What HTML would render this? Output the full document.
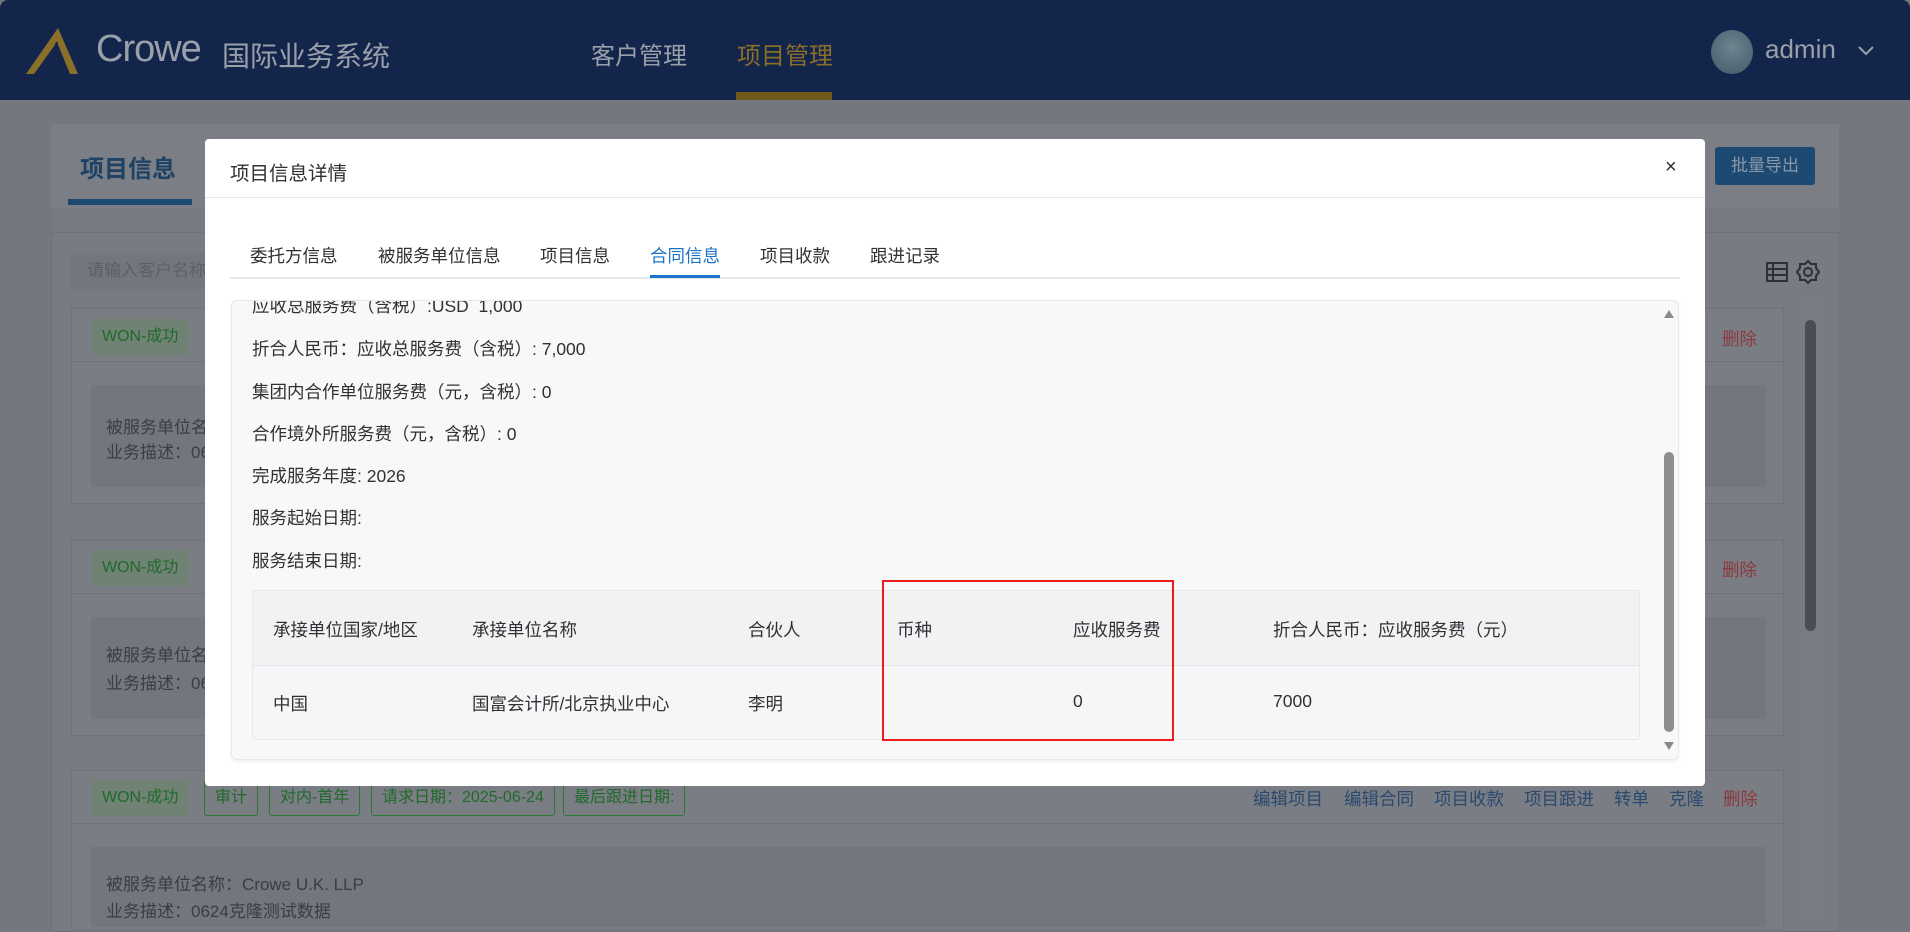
<!DOCTYPE html>
<html><head><meta charset="utf-8"><style>
*{margin:0;padding:0;box-sizing:border-box}
body{width:1910px;height:923px;overflow:hidden;background:#74777e;font-family:"Liberation Sans","Noto Sans CJK SC",sans-serif;position:relative;font-size:17.5px;color:#303133}
.a{position:absolute;white-space:nowrap}
.hdr{left:0;top:0;width:1910px;height:100px;background:#13254a;border-radius:8px 8px 0 0}
.card{background:#7a7d83;border:1px solid #6f7278}
.inner{background:#73767c}
.tag{height:36px;line-height:34px;padding:0 10px;font-size:16px;color:#1f6a2a;border:1px solid #2a7a36;border-radius:3px}
.won{background:#6f8274;border-color:#6f8274}
.bt{color:#2a4a70;font-size:17.5px}
.dl{color:#8a3a3e;font-size:17.5px}
.gt{color:#3a3d44;font-size:17px}
.tab{top:243px;font-size:17.5px;color:#303133}
.ln{left:251px;font-size:17.5px;color:#303133}
</style></head><body>
<div class="a hdr"></div>
<svg class="a" style="left:24px;top:28px" width="66" height="48" viewBox="0 0 66 48"><path d="M34 0 L54 46 L46 46 L33 14 L10 46 L2 46 Z" fill="#8a6f2a"/><path d="M33 14 L20 46 M33 14 L28 46" stroke="#13254a" stroke-width="2"/></svg>
<div class="a" style="left:96px;top:28px;font-size:38px;color:#9aa0aa;letter-spacing:-1px">Crowe</div>
<div class="a" style="left:222px;top:35px;font-size:28px;color:#9aa0aa">国际业务系统</div>
<div class="a" style="left:591px;top:36px;font-size:24px;color:#9aa0aa">客户管理</div>
<div class="a" style="left:737px;top:36px;font-size:24px;color:#8a6f2a">项目管理</div>
<div class="a" style="left:736px;top:92px;width:96px;height:8px;background:#6f5a1c"></div>
<div class="a" style="left:1711px;top:30px;width:42px;height:44px;border-radius:50%;background:radial-gradient(circle at 50% 40%,#6f8590,#3e5a66)"></div>
<div class="a" style="left:1765px;top:34px;font-size:26px;color:#9aa0aa">admin</div>
<svg class="a" style="left:1857px;top:45px" width="18" height="12"><path d="M2 2 L9 9 L16 2" stroke="#9aa0aa" stroke-width="2" fill="none"/></svg>

<div class="a" style="left:51px;top:124px;width:1788px;height:800px;background:#777a80"></div>
<div class="a" style="left:51px;top:124px;width:1788px;height:84px;background:#7b7e84"></div>
<div class="a" style="left:80px;top:149px;font-size:24px;font-weight:bold;color:#1d4266">项目信息</div>
<div class="a" style="left:68px;top:199px;width:124px;height:6px;background:#1a4a72"></div>
<div class="a" style="left:1715px;top:147px;width:100px;height:38px;background:#1d4a72;border-radius:3px;color:#8a97a8;font-size:17px;line-height:38px;text-align:center">批量导出</div>
<div class="a" style="left:51px;top:232px;width:1788px;height:700px;background:#787b81;border:1px solid #6f7278"></div>
<div class="a" style="left:71px;top:253px;width:330px;height:36px;background:#73767c;color:#5d6068;padding-left:16px;line-height:36px;font-size:17px">请输入客户名称</div>
<svg class="a" style="left:1766px;top:261px" width="22" height="22"><rect x="1" y="2" width="20" height="18" fill="none" stroke="#2c3038" stroke-width="2"/><path d="M1 8H21M1 14H21M7 2V20" stroke="#2c3038" stroke-width="2"/></svg>
<svg class="a" style="left:1796px;top:259px" width="24" height="26" viewBox="0 0 24 26"><circle cx="12" cy="13" r="4" fill="none" stroke="#2c3038" stroke-width="2"/><path d="M12 2 L15 5 L20 5 L20 9 L23 13 L20 17 L20 21 L15 21 L12 24 L9 21 L4 21 L4 17 L1 13 L4 9 L4 5 L9 5 Z" fill="none" stroke="#2c3038" stroke-width="2"/></svg>
<div class="a" style="left:1803px;top:300px;width:14px;height:620px;background:#797c82"></div>
<div class="a" style="left:1805px;top:320px;width:11px;height:311px;background:#4a4d53;border-radius:6px"></div>

<div class="a card" style="left:71px;top:308px;width:1713px;height:196px"></div>
<div class="a card" style="left:71px;top:540px;width:1713px;height:196px"></div>
<div class="a card" style="left:71px;top:770px;width:1713px;height:160px"></div>
<div class="a" style="left:71px;top:361px;width:1713px;height:1px;background:#6f7278"></div>
<div class="a" style="left:71px;top:593px;width:1713px;height:1px;background:#6f7278"></div>
<div class="a" style="left:71px;top:823px;width:1713px;height:1px;background:#6f7278"></div>
<div class="a inner" style="left:91px;top:385px;width:1675px;height:102px"></div>
<div class="a inner" style="left:91px;top:617px;width:1675px;height:102px"></div>
<div class="a inner" style="left:91px;top:847px;width:1675px;height:80px"></div>
<div class="a tag won" style="left:91px;top:319px">WON-成功</div>
<div class="a tag won" style="left:91px;top:550px">WON-成功</div>
<div class="a dl" style="left:1722px;top:326px">删除</div>
<div class="a dl" style="left:1722px;top:557px">删除</div>
<div class="a gt" style="left:106px;top:413px">被服务单位名</div>
<div class="a gt" style="left:106px;top:438px">业务描述：06</div>
<div class="a gt" style="left:106px;top:641px">被服务单位名</div>
<div class="a gt" style="left:106px;top:669px">业务描述：06</div>
<div class="a tag won" style="left:91px;top:780px">WON-成功</div>
<div class="a tag" style="left:204px;top:780px">审计</div>
<div class="a tag" style="left:269px;top:780px">对内-首年</div>
<div class="a tag" style="left:371px;top:780px">请求日期：2025-06-24</div>
<div class="a tag" style="left:563px;top:780px">最后跟进日期:</div>
<div class="a bt" style="left:1253px;top:786px">编辑项目</div>
<div class="a bt" style="left:1344px;top:786px">编辑合同</div>
<div class="a bt" style="left:1434px;top:786px">项目收款</div>
<div class="a bt" style="left:1524px;top:786px">项目跟进</div>
<div class="a bt" style="left:1614px;top:786px">转单</div>
<div class="a bt" style="left:1669px;top:786px">克隆</div>
<div class="a dl" style="left:1723px;top:786px">删除</div>
<div class="a gt" style="left:106px;top:870px">被服务单位名称：Crowe U.K. LLP</div>
<div class="a gt" style="left:106px;top:897px">业务描述：0624克隆测试数据</div>

<div class="a" style="left:205px;top:139px;width:1500px;height:647px;background:#fff;border-radius:4px"></div>
<div class="a" style="left:230px;top:157px;font-size:19.5px;color:#303133">项目信息详情</div>
<div class="a" style="left:1665px;top:156px;font-size:20px;color:#303133">×</div>
<div class="a" style="left:205px;top:197px;width:1500px;height:1px;background:#e4e7ed"></div>
<div class="a tab" style="left:250px">委托方信息</div>
<div class="a tab" style="left:378px">被服务单位信息</div>
<div class="a tab" style="left:540px">项目信息</div>
<div class="a tab" style="left:650px;color:#1a73c8">合同信息</div>
<div class="a tab" style="left:760px">项目收款</div>
<div class="a tab" style="left:870px">跟进记录</div>
<div class="a" style="left:230px;top:277px;width:1450px;height:2px;background:#e4e7ed"></div>
<div class="a" style="left:650px;top:275px;width:70px;height:3px;background:#1a73c8"></div>

<div class="a" style="left:231px;top:300px;width:1448px;height:460px;background:#f8f8f8;border:1px solid #e8e8e8;border-radius:6px;overflow:hidden;box-shadow:0 2px 4px rgba(0,0,0,.06)">
<div class="a" style="left:20px;top:-8px;font-size:17.5px">应收总服务费（含税）:USD&nbsp;&nbsp;1,000</div>
<div class="a" style="left:20px;top:35px">折合人民币：应收总服务费（含税）: 7,000</div>
<div class="a" style="left:20px;top:78px">集团内合作单位服务费（元，含税）: 0</div>
<div class="a" style="left:20px;top:120px">合作境外所服务费（元，含税）: 0</div>
<div class="a" style="left:20px;top:162px">完成服务年度: 2026</div>
<div class="a" style="left:20px;top:204px">服务起始日期:</div>
<div class="a" style="left:20px;top:247px">服务结束日期:</div>
<div class="a" style="left:20px;top:289px;width:1388px;height:150px;border:1px solid #e6e8eb;border-radius:3px;background:#f5f6f8;overflow:hidden">
 <div class="a" style="left:0;top:0;width:1388px;height:75px;background:#f1f2f4;border-bottom:1px solid #e4e6ea"></div>
 <div class="a" style="left:20px;top:26px">承接单位国家/地区</div>
 <div class="a" style="left:219px;top:26px">承接单位名称</div>
 <div class="a" style="left:495px;top:26px">合伙人</div>
 <div class="a" style="left:644px;top:26px">币种</div>
 <div class="a" style="left:820px;top:26px">应收服务费</div>
 <div class="a" style="left:1020px;top:26px">折合人民币：应收服务费（元）</div>
 <div class="a" style="left:20px;top:100px">中国</div>
 <div class="a" style="left:219px;top:100px">国富会计所/北京执业中心</div>
 <div class="a" style="left:495px;top:100px">李明</div>
 <div class="a" style="left:820px;top:100px">0</div>
 <div class="a" style="left:1020px;top:100px">7000</div>
</div>
<div class="a" style="left:1428px;top:0;width:18px;height:460px;background:#f8f8f8"></div>
<svg class="a" style="left:1431px;top:8px" width="12" height="10"><path d="M6 1 L11 9 L1 9Z" fill="#8a8a8a"/></svg>
<div class="a" style="left:1432px;top:151px;width:10px;height:280px;background:#8e8e8e;border-radius:5px"></div>
<svg class="a" style="left:1431px;top:440px" width="12" height="10"><path d="M1 1 L11 1 L6 9Z" fill="#8a8a8a"/></svg>
</div>
<div class="a" style="left:882px;top:580px;width:292px;height:161px;border:2px solid #ee1c1c"></div>
</body></html>
